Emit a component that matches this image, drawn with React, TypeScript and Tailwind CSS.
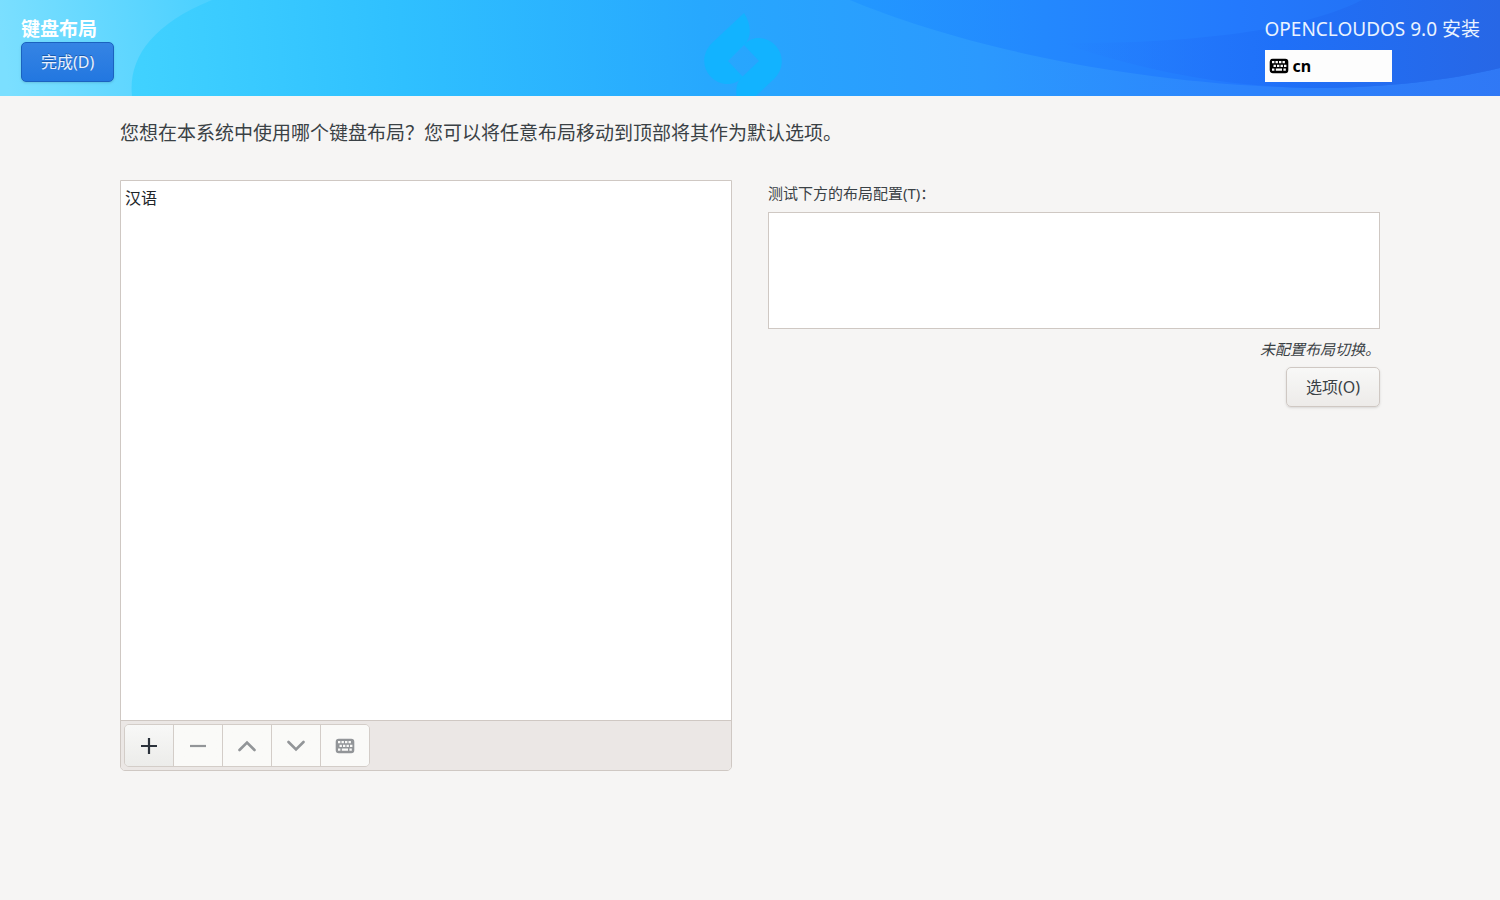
import React, { useState } from "react";

interface ToolButtonProps {
  label: string;
  disabled?: boolean;
  onClick?: () => void;
  children: React.ReactNode;
}

const KeyboardIcon: React.FC<{ className?: string }> = ({ className }) => (
  <svg viewBox="0 0 20 16" className={className} aria-hidden="true">
    <path
      fill="currentColor"
      fillRule="evenodd"
      d="M3.7 .8h12.600a3 3 0 0 1 3 3v8.400a3 3 0 0 1-3 3H3.700a3 3 0 0 1-3-3v-8.400a3 3 0 0 1 3-3z
        M3 3v2.300h2.400V3z M6.500 3v2.300h2.400V3z M10 3v2.300h2.400V3z M13.500 3v2.300h2.400V3z
        M4.500 6.700v2.300h2.400V6.700z M8 6.700v2.300h2.400V6.700z M11.500 6.700v2.300h2.400V6.700z M15 6.700v2.300h2.400V6.700z
        M3 10.400v2.300h2.400v-2.300z M6.800 10.400v2.300h6.200v-2.300z M14.400 10.400v2.300h2.400v-2.300z"
    />
  </svg>
);

const HeaderBackdrop = () => (
  <svg
    viewBox="0 0 1500 96"
    preserveAspectRatio="none"
    className="absolute inset-0 h-full w-full"
    aria-hidden="true"
  >
    <defs>
      <linearGradient id="base" gradientUnits="userSpaceOnUse" x1="0" y1="30" x2="210" y2="0">
        <stop offset="0" stopColor="#7bdfff" />
        <stop offset="1" stopColor="#4bd0ff" />
      </linearGradient>
      <linearGradient id="wave" gradientUnits="userSpaceOnUse" x1="130" y1="96" x2="1500" y2="0">
        <stop offset="0" stopColor="#41d2ff" />
        <stop offset="0.2" stopColor="#2fc0ff" />
        <stop offset="0.42" stopColor="#27a8fe" />
        <stop offset="0.62" stopColor="#2b99fe" />
        <stop offset="0.82" stopColor="#2c82fc" />
        <stop offset="1" stopColor="#3078f5" />
      </linearGradient>
      <linearGradient id="swell" gradientUnits="userSpaceOnUse" x1="850" y1="0" x2="1500" y2="0">
        <stop offset="0" stopColor="#2298ff" />
        <stop offset="0.3" stopColor="#2388fe" />
        <stop offset="0.6" stopColor="#2379fd" />
        <stop offset="1" stopColor="#236cee" />
      </linearGradient>
      <linearGradient id="crest" gradientUnits="userSpaceOnUse" x1="1062" y1="0" x2="1500" y2="0">
        <stop offset="0" stopColor="#2378fc" stopOpacity="0" />
        <stop offset="0.5" stopColor="#1f70f8" />
        <stop offset="1" stopColor="#2767e6" />
      </linearGradient>
    </defs>
    <rect width="1500" height="96" fill="url(#base)" />
    <path d="M132 96C128 60 150 25 212 0H1500V96z" fill="url(#wave)" />
    <path d="M850 0C950 42 1120 84 1310 88C1390 88 1450 80 1500 68V0z" fill="url(#swell)" />
    <path
      d="M1062 43C1180 44 1300 32 1362 0H1500V68C1450 80 1390 88 1310 88C1220 86 1140 70 1062 43z"
      fill="url(#crest)"
    />
  </svg>
);

const HeaderMark = () => (
  <svg
    viewBox="0 0 80 96"
    className="absolute top-0 left-1/2 h-24 w-20 -translate-x-[47px]"
    fill="#12b3ff"
    aria-hidden="true"
  >
    <path d="M41 13L9 43C-1 53 -1 67 7 76C16 86 31 87 40 77L25 61L42 44C48 38 49 25 41 13z" />
    <path d="M39 109L71 79C81 69 81 55 73 46C64 36 49 35 41 45L56 61L38 78C32 84 31 97 39 109z" />
  </svg>
);

const ToolButton: React.FC<ToolButtonProps> = ({ label, disabled, onClick, children }) => (
  <button
    type="button"
    aria-label={label}
    disabled={disabled}
    onClick={onClick}
    className="flex h-[41px] w-[49px] items-center justify-center border-r border-[#d3cdc8] bg-gradient-to-b from-[#f8f8f7] to-[#ececea] text-[#2b323b] first:rounded-l last:w-12 last:rounded-r last:border-r-0 disabled:from-[#fafaf8] disabled:to-[#fafaf8] disabled:text-[#929598]"
  >
    {children}
  </button>
);

export default function App() {
  const [layouts] = useState<string[]>(["汉语"]);
  const [testText, setTestText] = useState("");

  return (
    <div className="min-h-screen bg-[#f6f5f4] font-['Noto_Sans','Noto_Sans_CJK_SC',sans-serif] text-[15px] leading-5 text-[#3a4145]">
      {/* Header */}
      <header className="relative h-24 overflow-hidden">
        <HeaderBackdrop />
        <HeaderMark />
        <div className="relative flex items-start justify-between px-5 pt-4">
          <div className="flex flex-col items-start pl-px">
            <h1 className="text-[19px] leading-[26px] font-bold text-white">键盘布局</h1>
            <button
              type="button"
              className="h-10 rounded-[5px] border border-[#1b62c0] bg-gradient-to-b from-[#3584e4] to-[#2277e0] px-[19px] text-base text-[#e9f1fc] shadow-sm text-shadow-[0_-1px_0_#1b5cae]"
            >
              完成(D)
            </button>
          </div>
          <div className="flex flex-col items-start gap-2">
            <p className="text-[19px] leading-[26px] text-[#eaf3ff]">OPENCLOUDOS 9.0 安装</p>
            <button
              type="button"
              className="flex h-8 w-[127px] items-center gap-1 bg-[#fdfdfd] px-1 text-base font-bold text-black"
            >
              <KeyboardIcon className="h-4 w-5" />
              cn
            </button>
          </div>
        </div>
      </header>

      <main className="px-[8%] pt-6">
        <p className="text-[19px] leading-[26px]">
          您想在本系统中使用哪个键盘布局？您可以将任意布局移动到顶部将其作为默认选项。
        </p>

        <div className="mt-[34px] grid grid-cols-2 gap-9">
          {/* Selected layouts */}
          <section className="overflow-hidden rounded-b-[5px] border border-[#cfc8c3]">
            <ul className="h-[calc(60vh-1px)] bg-white py-[7px] text-[#202428]">
              {layouts.map(layout => (
                <li key={layout} className="px-1 text-base leading-5">
                  {layout}
                </li>
              ))}
            </ul>
            <div className="border-t border-[#cfc8c3] bg-[#ebe7e5] p-[3px]">
              <div className="inline-flex rounded-[5px] border border-[#d3cdc8] align-top">
                <ToolButton label="添加布局">
                  <svg viewBox="0 0 18 18" className="size-[18px]" aria-hidden="true">
                    <path d="M9 1v16M1 9h16" stroke="currentColor" strokeWidth="2.2" />
                  </svg>
                </ToolButton>
                <ToolButton label="移除布局" disabled>
                  <svg viewBox="0 0 18 18" className="size-[18px]" aria-hidden="true">
                    <path d="M1 9h16" stroke="currentColor" strokeWidth="2.2" />
                  </svg>
                </ToolButton>
                <ToolButton label="上移" disabled>
                  <svg viewBox="0 0 18 18" className="size-[18px]" fill="none" aria-hidden="true">
                    <path d="M1.500 13L9 5.500L16.500 13" stroke="currentColor" strokeWidth="2.600" strokeLinecap="round" />
                  </svg>
                </ToolButton>
                <ToolButton label="下移" disabled>
                  <svg viewBox="0 0 18 18" className="size-[18px]" fill="none" aria-hidden="true">
                    <path d="M1.500 5L9 12.500L16.500 5" stroke="currentColor" strokeWidth="2.600" strokeLinecap="round" />
                  </svg>
                </ToolButton>
                <ToolButton label="预览布局" disabled>
                  <KeyboardIcon className="h-4 w-5" />
                </ToolButton>
              </div>
            </div>
          </section>

          {/* Layout test */}
          <section className="flex flex-col items-end pt-[3px]">
            <label htmlFor="layout-test" className="self-start">
              测试下方的布局配置(T)：
            </label>
            <textarea
              id="layout-test"
              value={testText}
              onChange={e => setTestText(e.target.value)}
              className="mt-[9px] h-[117px] w-full resize-none border border-[#cfc8c3] bg-white p-1 outline-none"
            />
            <p className="mt-[10px] italic">未配置布局切换。</p>
            <button
              type="button"
              className="mt-2 h-10 rounded-[5px] border border-[#cfc8c3] bg-gradient-to-b from-[#f8f8f7] to-[#edebe9] px-[19px] text-base shadow-sm"
            >
              选项(O)
            </button>
          </section>
        </div>
      </main>
    </div>
  );
}
